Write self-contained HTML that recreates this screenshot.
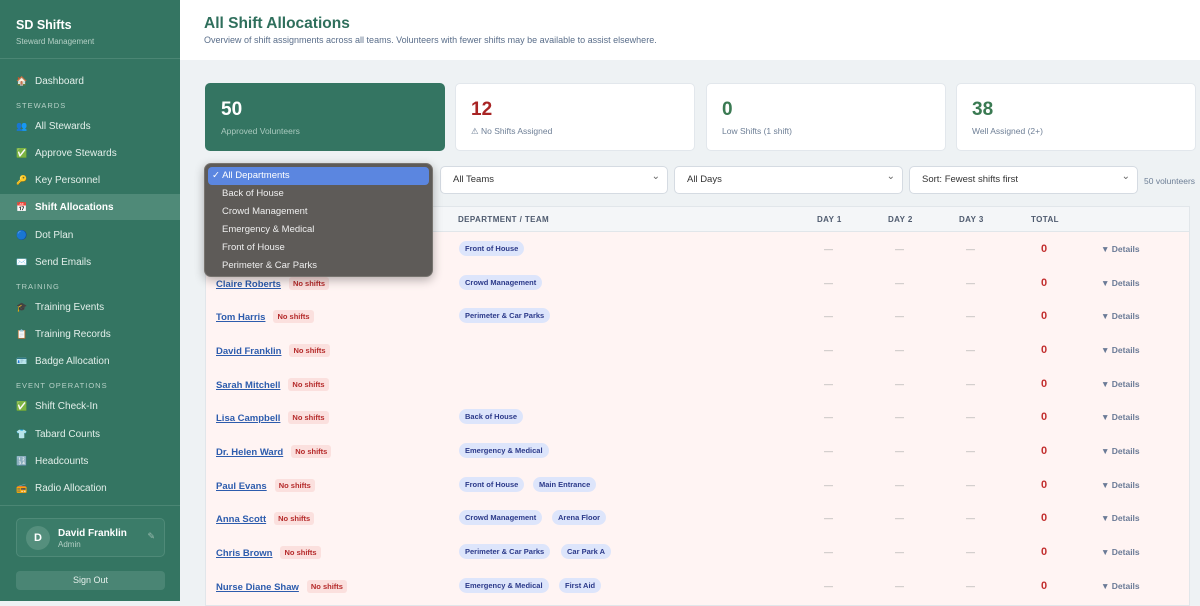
<!DOCTYPE html>
<html><head><meta charset="utf-8"><style>
*{box-sizing:border-box;margin:0;padding:0}
body{width:1200px;height:601px;overflow:hidden;font-family:"Liberation Sans",sans-serif;background:#eef2f4;position:relative}
.sb{position:absolute;left:0;top:0;width:180px;height:601px;background:#347562;color:#e6f0ec}
.sb h1{position:absolute;left:16px;top:18px;font-size:12.5px;color:#fff;font-weight:bold}
.sb .sub{position:absolute;left:16px;top:37px;font-size:8px;color:#b5d0c6}
.sb .line{position:absolute;left:0;top:58px;width:180px;border-top:1px solid #4b8674}
.it{position:absolute;left:0;width:180px;height:26px;font-size:10px;line-height:26px;padding-left:16px;color:#e3efea}
.it i{font-style:normal;display:inline-block;width:19px;font-size:9px}
.it.act{background:#4f8a78;color:#fff;font-weight:bold}
.sec{position:absolute;left:16px;font-size:7.5px;letter-spacing:1px;color:#b5d0c6}
.user{position:absolute;left:16px;top:518px;width:149px;height:39px;border:1px solid #4f8a78;border-radius:5px;background:#3b7c69}
.av{position:absolute;left:9px;top:7px;width:24px;height:24px;border-radius:50%;background:#558f7d;color:#fff;font-size:11px;font-weight:bold;text-align:center;line-height:24px}
.so{position:absolute;left:16px;top:571px;width:149px;height:19px;border-radius:4px;background:#4a8574;color:#e6f0ec;font-size:9px;text-align:center;line-height:19px}
.hdr{position:absolute;left:180px;top:0;width:1020px;height:60px;background:#fff}
.hdr h2{position:absolute;left:24px;top:15px;font-size:15.5px;color:#2f6f5c}
.hdr p{position:absolute;left:24px;top:35px;font-size:9px;color:#5a6e8a}
.card{position:absolute;top:83px;width:240px;height:68px;background:#fff;border:1px solid #e2e7ec;border-radius:5px}
.card b{position:absolute;left:15px;top:15px;font-size:19px}
.card span{position:absolute;left:15px;top:42px;font-size:8.5px;color:#6e7f96}
.sel{position:absolute;top:166px;height:28px;background:#fff;border:1px solid #d5dbe2;border-radius:5px;font-size:9.5px;color:#333;line-height:26px;padding-left:12px}
.sel:after{content:"⌄";position:absolute;right:7px;top:-3px;color:#666;font-size:10px}
.tbl{position:absolute;left:205px;top:206px;width:985px;height:400px;background:#fff4f3;border:1px solid #e1e6ea}
.th{position:absolute;left:0;top:0;width:983px;height:25px;background:#f4f6f8;border-bottom:1px solid #e1e6ea;font-size:8px;font-weight:bold;color:#4e5a6e;letter-spacing:.4px}
.th span{position:absolute;top:8px}
.row{position:absolute;left:0;width:983px;height:34px;font-size:9.5px}
.nm{position:absolute;left:10px;top:11px;color:#2d5cad;text-decoration:underline;font-weight:bold}
.ns{display:inline-block;margin-left:8px;background:#fbe0de;color:#b52a2a;font-size:7.5px;font-weight:bold;padding:2px 4px;border-radius:3px;text-decoration:none;vertical-align:1px}
.tg{position:absolute;top:9px;background:#dde5fb;color:#2c3a8a;font-size:7.5px;font-weight:bold;padding:3px 6px;border-radius:8px}
.d{position:absolute;top:12px;color:#aaa;font-size:9px}
.tot{position:absolute;left:835px;top:11px;color:#c22e2e;font-weight:bold;font-size:11px}
.det{position:absolute;left:895px;top:12px;color:#6a7a96;font-size:8.5px;font-weight:bold}
.dd{position:absolute;left:204px;top:163px;width:229px;height:114px;background:#5e5b58;border:1px solid #77746f;border-radius:7px;box-shadow:0 3px 10px rgba(0,0,0,.3);font-size:9.5px;color:#eee}
.dd div{height:18px;line-height:18px;padding-left:17px}
.dd .hl{background:#5b86e0;color:#fff;margin:3px 3px 0 3px;border-radius:4px;padding-left:4px}
</style></head><body>
<div class="sb">
<h1>SD Shifts</h1><div class="sub">Steward Management</div><div class="line"></div>
<div class="it" style="top:68px"><i>🏠</i>Dashboard</div>
<div class="sec" style="top:101px">STEWARDS</div>
<div class="it" style="top:113px"><i>👥</i>All Stewards</div>
<div class="it" style="top:140px"><i>✅</i>Approve Stewards</div>
<div class="it" style="top:167px"><i>🔑</i>Key Personnel</div>
<div class="it act" style="top:194px"><i>📅</i>Shift Allocations</div>
<div class="it" style="top:222px"><i>🔵</i>Dot Plan</div>
<div class="it" style="top:249px"><i>✉️</i>Send Emails</div>
<div class="sec" style="top:282px">TRAINING</div>
<div class="it" style="top:294px"><i>🎓</i>Training Events</div>
<div class="it" style="top:321px"><i>📋</i>Training Records</div>
<div class="it" style="top:348px"><i>🪪</i>Badge Allocation</div>
<div class="sec" style="top:381px">EVENT OPERATIONS</div>
<div class="it" style="top:393px"><i>✅</i>Shift Check-In</div>
<div class="it" style="top:421px"><i>👕</i>Tabard Counts</div>
<div class="it" style="top:448px"><i>🔢</i>Headcounts</div>
<div class="it" style="top:475px"><i>📻</i>Radio Allocation</div>
<div class="line" style="top:505px"></div>
<div class="user"><div class="av">D</div><div style="position:absolute;left:41px;top:9px;font-size:10px;font-weight:bold;color:#fff">David Franklin</div><div style="position:absolute;left:41px;top:21px;font-size:8px;color:#b5d0c6">Admin</div><div style="position:absolute;right:9px;top:12px;font-size:9px;color:#9cbcb0">✎</div></div>
<div class="so">Sign Out</div>
</div>
<div class="hdr"><h2>All Shift Allocations</h2><p>Overview of shift assignments across all teams. Volunteers with fewer shifts may be available to assist elsewhere.</p></div>
<div class="card" style="left:205px;background:#347562;border-color:#347562"><b style="color:#fff">50</b><span style="color:#a9c9be">Approved Volunteers</span></div>
<div class="card" style="left:455px"><b style="color:#a82424">12</b><span>⚠ No Shifts Assigned</span></div>
<div class="card" style="left:706px"><b style="color:#3a7a52">0</b><span>Low Shifts (1 shift)</span></div>
<div class="card" style="left:956px"><b style="color:#3a7a52">38</b><span>Well Assigned (2+)</span></div>
<div class="sel" style="left:205px;width:228px">All Departments</div>
<div class="sel" style="left:440px;width:228px">All Teams</div>
<div class="sel" style="left:674px;width:229px">All Days</div>
<div class="sel" style="left:909px;width:229px">Sort: Fewest shifts first</div>
<div style="position:absolute;left:1144px;top:176px;font-size:8.5px;color:#6e7f96">50 volunteers</div>
<div class="tbl">
<div class="th"><span style="left:10px">VOLUNTEER</span><span style="left:252px">DEPARTMENT / TEAM</span><span style="left:611px">DAY 1</span><span style="left:682px">DAY 2</span><span style="left:753px">DAY 3</span><span style="left:825px">TOTAL</span></div>
<div class="row" style="top:25px"><span class="nm">James Wilson<span class="ns">No shifts</span></span><span class="tg" style="left:253px">Front of House</span><span class="d" style="left:618px">—</span><span class="d" style="left:689px">—</span><span class="d" style="left:760px">—</span><span class="tot">0</span><span class="det">▼ Details</span></div>
<div class="row" style="top:59px"><span class="nm">Claire Roberts<span class="ns">No shifts</span></span><span class="tg" style="left:253px">Crowd Management</span><span class="d" style="left:618px">—</span><span class="d" style="left:689px">—</span><span class="d" style="left:760px">—</span><span class="tot">0</span><span class="det">▼ Details</span></div>
<div class="row" style="top:92px"><span class="nm">Tom Harris<span class="ns">No shifts</span></span><span class="tg" style="left:253px">Perimeter &amp; Car Parks</span><span class="d" style="left:618px">—</span><span class="d" style="left:689px">—</span><span class="d" style="left:760px">—</span><span class="tot">0</span><span class="det">▼ Details</span></div>
<div class="row" style="top:126px"><span class="nm">David Franklin<span class="ns">No shifts</span></span><span class="d" style="left:618px">—</span><span class="d" style="left:689px">—</span><span class="d" style="left:760px">—</span><span class="tot">0</span><span class="det">▼ Details</span></div>
<div class="row" style="top:160px"><span class="nm">Sarah Mitchell<span class="ns">No shifts</span></span><span class="d" style="left:618px">—</span><span class="d" style="left:689px">—</span><span class="d" style="left:760px">—</span><span class="tot">0</span><span class="det">▼ Details</span></div>
<div class="row" style="top:193px"><span class="nm">Lisa Campbell<span class="ns">No shifts</span></span><span class="tg" style="left:253px">Back of House</span><span class="d" style="left:618px">—</span><span class="d" style="left:689px">—</span><span class="d" style="left:760px">—</span><span class="tot">0</span><span class="det">▼ Details</span></div>
<div class="row" style="top:227px"><span class="nm">Dr. Helen Ward<span class="ns">No shifts</span></span><span class="tg" style="left:253px">Emergency &amp; Medical</span><span class="d" style="left:618px">—</span><span class="d" style="left:689px">—</span><span class="d" style="left:760px">—</span><span class="tot">0</span><span class="det">▼ Details</span></div>
<div class="row" style="top:261px"><span class="nm">Paul Evans<span class="ns">No shifts</span></span><span class="tg" style="left:253px">Front of House</span><span class="tg" style="left:327px">Main Entrance</span><span class="d" style="left:618px">—</span><span class="d" style="left:689px">—</span><span class="d" style="left:760px">—</span><span class="tot">0</span><span class="det">▼ Details</span></div>
<div class="row" style="top:294px"><span class="nm">Anna Scott<span class="ns">No shifts</span></span><span class="tg" style="left:253px">Crowd Management</span><span class="tg" style="left:346px">Arena Floor</span><span class="d" style="left:618px">—</span><span class="d" style="left:689px">—</span><span class="d" style="left:760px">—</span><span class="tot">0</span><span class="det">▼ Details</span></div>
<div class="row" style="top:328px"><span class="nm">Chris Brown<span class="ns">No shifts</span></span><span class="tg" style="left:253px">Perimeter &amp; Car Parks</span><span class="tg" style="left:355px">Car Park A</span><span class="d" style="left:618px">—</span><span class="d" style="left:689px">—</span><span class="d" style="left:760px">—</span><span class="tot">0</span><span class="det">▼ Details</span></div>
<div class="row" style="top:362px"><span class="nm">Nurse Diane Shaw<span class="ns">No shifts</span></span><span class="tg" style="left:253px">Emergency &amp; Medical</span><span class="tg" style="left:353px">First Aid</span><span class="d" style="left:618px">—</span><span class="d" style="left:689px">—</span><span class="d" style="left:760px">—</span><span class="tot">0</span><span class="det">▼ Details</span></div>
</div>
<div class="dd"><div class="hl">✓ All Departments</div><div>Back of House</div><div>Crowd Management</div><div>Emergency &amp; Medical</div><div>Front of House</div><div>Perimeter &amp; Car Parks</div></div>
</body></html>
